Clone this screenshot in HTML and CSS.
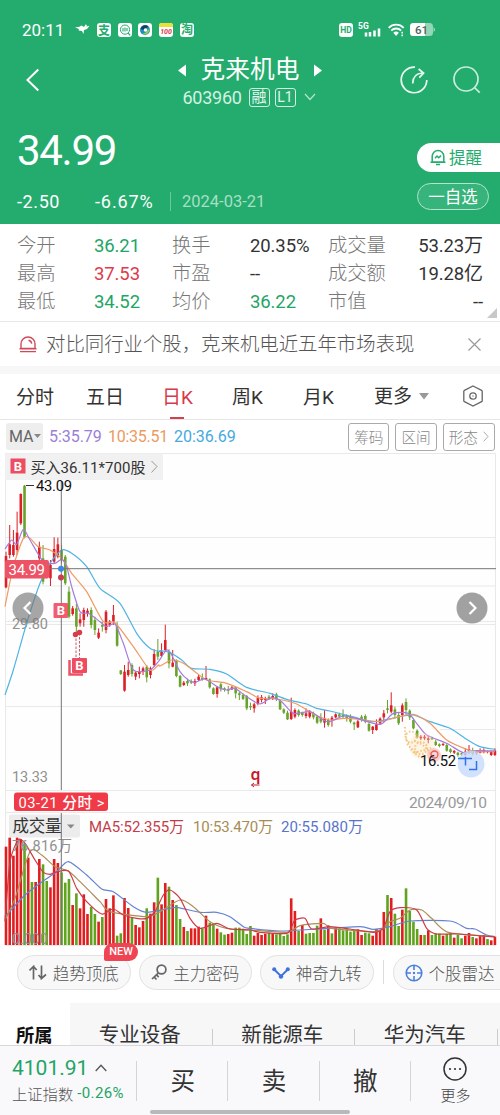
FILE: index.html
```html
<!DOCTYPE html>
<html lang="zh-CN">
<head>
<meta charset="utf-8">
<title>克来机电 603960</title>
<link rel="stylesheet" href="styles.css">
</head>
<body>
<div class="app">
  <header class="header">
    <div class="status">
      <span class="clock">20:11</span>
      <div class="status-apps">
        <svg width="15" height="14" viewBox="0 0 15 14"><path d="M0 4.500l4.500-.800L6.500 2.500 9 4l1.500-2.500L12 2l-.800 1.500 3.300-.700L12 6l-3 1-.500 4L7 8 3.500 7.500 4 6z" fill="#fff"/></svg>
        <svg width="14" height="14" viewBox="0 0 14 14"><rect width="14" height="14" rx="3" fill="#fff"/><text x="7" y="11.500" class="app-glyph">支</text></svg>
        <svg width="14" height="14" viewBox="0 0 14 14"><rect width="14" height="14" rx="3" fill="#fff"/><circle cx="7" cy="6.600" r="4.600" fill="none" stroke="#24ac6e"/><path d="M10 10l2.300 2.300M5 5v3.400M7 4.400v4.200M9 5v3" stroke="#24ac6e" stroke-width="1.100"/></svg>
        <svg width="14" height="14" viewBox="0 0 14 14"><rect width="14" height="14" rx="3" fill="#fff"/><circle cx="7" cy="7" r="5" fill="#1c8ec0"/><path d="M2.500 6a5 5 0 0 1 8-2.600L6 7z" fill="#173f5a"/><path d="M11.500 5.500a5 5 0 0 1-7 5.500l3-1.500z" fill="#8fd14a"/><circle cx="7.500" cy="7" r="1.800" fill="#fff"/></svg>
        <svg width="14" height="14" viewBox="0 0 14 14"><rect width="14" height="14" rx="3" fill="#fff"/><path d="M0 4V2.500A2.500 2.500 0 0 1 2.500 0h9A2.500 2.500 0 0 1 14 2.500V4z" fill="#e9e13a"/><text x="7" y="10.500" class="app-hundred">100</text></svg>
        <svg width="14" height="14" viewBox="0 0 14 14"><rect width="14" height="14" rx="3" fill="#fff"/><text x="7" y="11.200" class="app-glyph">淘</text></svg>
      </div>
      <div class="status-sys">
        <svg width="14" height="14" viewBox="0 0 14 14"><rect width="14" height="14" rx="3" fill="#fff"/><text x="7" y="10.200" class="hd">HD</text></svg>
        <svg width="24" height="15" viewBox="0 0 24 15"><text x="0" y="7" class="five-g">5G</text><path d="M8 14.500v-4M12 14.500V10M16.500 14.500V8.500M21 14.500V6.500" stroke="#fff" stroke-width="2.500"/></svg>
        <svg width="17" height="14" viewBox="0 0 17 14"><g fill="none" stroke="#fff" stroke-width="1.800"><path d="M.700 4.800a10.500 10.500 0 0 1 15 0M3.300 7.600a6.800 6.800 0 0 1 9.800 0"/></g><path d="M5.300 9.800a4 4 0 0 1 5.600 0L8.100 13z" fill="#fff"/><path d="M14.200 8.800v1.800M14.200 11.400v1.800" stroke="#fff" stroke-width="1.500"/></svg>
        <svg width="25" height="13" viewBox="0 0 25 13"><rect width="23" height="13" rx="3.500" fill="#94d7b8"/><path d="M23.500 4l1.500 1.500v2L23.500 9z" fill="#94d7b8"/><path d="M3.500 0H15v13H3.500A3.500 3.500 0 0 1 0 9.500v-6A3.500 3.500 0 0 1 3.500 0z" fill="#fff"/><text x="11.500" y="10.700" class="battery">61</text></svg>
      </div>
    </div>
    <div class="nav">
      <svg class="back" width="14" height="24" viewBox="0 0 14 24"><path d="M12.300 1.500L1.500 12l10.800 10.500" fill="none" stroke="#fff" stroke-width="2"/></svg>
      <div class="nav-title">
        <div class="name-row">
          <svg width="8" height="13" viewBox="0 0 8 13"><path d="M8 .500v12L0 6.500z" fill="#fff"/></svg>
          <span class="name">克来机电</span>
          <svg width="8" height="13" viewBox="0 0 8 13"><path d="M0 .500v12l8-6z" fill="#fff"/></svg>
        </div>
        <div class="code-row">
          <span class="code">603960</span><span class="tag">融</span><span class="tag tag-level">L1</span>
          <svg width="12" height="8" viewBox="0 0 12 8"><path d="M1 1l5 5.500L11 1" fill="none" stroke="#b4e4cd" stroke-width="1.200"/></svg>
        </div>
      </div>
      <div class="nav-actions">
        <svg width="28" height="28" viewBox="0 0 28 28"><g fill="none" stroke="#e9f8f1" stroke-width="1.700"><path d="M15 1.200A12.800 12.800 0 1 0 26.800 14"/><path d="M12.700 17.500c0-6 3-10 9.800-10.500M18.600 3l5 4-4.300 4.600"/></g></svg>
        <svg width="28" height="28" viewBox="0 0 28 28"><g fill="none" stroke="#c9eedd" stroke-width="1.700"><circle cx="13" cy="13" r="12"/><path d="M21.500 21.500l5.200 5.200"/></g></svg>
      </div>
    </div>
    <div class="quote">
      <div class="quote-main">
        <div class="price">34.99</div>
        <div class="change"><span class="delta">-2.50</span><span class="percent">-6.67%</span><span class="date">2024-03-21</span></div>
      </div>
      <div class="quote-actions">
        <div class="pill-alert"><svg width="16" height="17" viewBox="0 0 16 17"><g fill="none" stroke="#24ac6e" stroke-width="1.500"><path d="M2.200 13V7.300a5.800 5.800 0 0 1 11.600 0V13zM.500 13.300h15"/><path d="M5 9.200l2-2.200 1.700 1.800L11 6.600"/><path d="M6 15.500h4"/></g></svg><span>提醒</span></div>
        <div class="pill-watch">一自选</div>
      </div>
    </div>
  </header>

  <section class="stats">
    <span>今开</span><b class="down">36.21</b><span>换手</span><b>20.35%</b><span>成交量</span><b class="end">53.23<i>万</i></b>
    <span>最高</span><b class="up">37.53</b><span>市盈</span><b>--</b><span>成交额</span><b class="end">19.28<i>亿</i></b>
    <span>最低</span><b class="down">34.52</b><span>均价</span><b class="down">36.22</b><span>市值</span><b class="end">--</b>
    <svg class="corner" width="10" height="10" viewBox="0 0 10 10"><path d="M10 0v10H0z" fill="#c8c8c8"/></svg>
  </section>

  <section class="notice">
    <svg width="18" height="17" viewBox="0 0 18 17"><g fill="none" stroke="#cf4a58" stroke-width="1.400"><path d="M2 12.500V8a7 7 0 0 1 14 0v4.500zM.500 12.800h17M1 15.600h16"/><path d="M9.500 4.300c2 .400 3 1.700 3.200 3.400"/></g></svg>
    <span>对比同行业个股，克来机电近五年市场表现</span>
    <svg class="close" width="13" height="13" viewBox="0 0 13 13"><path d="M.500.500l12 12M12.500.500l-12 12" stroke="#999" stroke-width="1.200"/></svg>
  </section>

  <nav class="tabs">
    <span>分时</span><span>五日</span><span class="active">日K</span><span>周K</span><span>月K</span><span class="more">更多<svg width="10" height="7" viewBox="0 0 10 7"><path d="M0 0h10L5 6.500z" fill="#999"/></svg></span>
    <svg class="settings" width="20" height="22" viewBox="0 0 20 22"><g fill="none" stroke="#666" stroke-width="1.300"><path d="M10 1l8.600 4.300q.600.300.600 1v9.400q0 .700-.600 1L10 21l-8.600-4.300q-.600-.300-.600-1V6.300q0-.700.600-1z"/><circle cx="10" cy="11" r="3.200"/></g><circle cx="10" cy="11" r=".8" fill="#888"/></svg>
  </nav>

  <div class="ma-bar">
    <span class="ma-select">MA<svg width="7" height="5" viewBox="0 0 7 5"><path d="M0 0h7L3.500 4z" fill="#888"/></svg></span>
    <span class="ma5">5:35.79</span><span class="ma10">10:35.51</span><span class="ma20">20:36.69</span>
    <div class="tools"><span>筹码</span><span>区间</span><span>形态<svg width="6" height="11" viewBox="0 0 6 11"><path d="M.700.700l4.300 4.800L.700 10.300" fill="none" stroke="#aaa"/></svg></span></div>
  </div>

  <svg class="chart" width="500" height="493" viewBox="0 453 500 493">
    <rect x="5" y="453" width="491" height="492" fill="#fefefe"/>
    <g class="grid"><path d="M5 453.500H496M5 537.500H496M5 586H496M5 621.500H496M5 624.500H496M5 706.500H496M440 729.500H496M5 790.500H496M5 812.500H496M5 945.500H496M5.500 453V945M495.500 453V945"/></g>
    <text x="12" y="629" class="axis" textLength="36">29.80</text>
    <text x="12" y="781.500" class="axis" textLength="36">13.33</text>
    <rect x="9" y="814.500" width="71" height="23" rx="2" fill="#ececec"/>
    <path d="M67 824.500h7.500l-3.750 4z" fill="#888"/>
    <g id="candles"></g>
    <g id="volumes"></g>
    <g id="averages"></g>
    <text x="12" y="850.500" class="axis" textLength="60">76.816万</text>
    <text x="12" y="943.500" class="axis" textLength="36">0.000</text>
    <path d="M61.300 481V790M61.300 813V945" stroke="#747474"/>
    <path d="M5 568.700H496" stroke="#747474"/>

    <rect x="5" y="453.500" width="158" height="26.500" fill="#f1f1f1"/>
    <rect x="10.500" y="458.500" width="15" height="15" fill="#ee4c60"/>
    <text x="18" y="471" class="mark">B</text>
    <text x="30.500" y="472.500" class="trade" textLength="115">买入36.11*700股</text>
    <path d="M151.500 461l5.500 5.500-5.500 6" fill="none" stroke="#999"/>
    <path d="M26 485.500h8" stroke="#333"/>
    <text x="36" y="491" class="extreme" textLength="36">43.09</text>

    <circle cx="28" cy="608" r="15.500" fill="#777" opacity=".65"/>
    <path d="M30.500 602l-6 6 6 6" class="arrow"/>
    <circle cx="472" cy="608" r="15.500" fill="#a1a1a1"/>
    <path d="M469.500 602l6 6-6 6" class="arrow"/>
    <rect x="5" y="560" width="44" height="18.500" rx="2" fill="#ec5365"/>
    <text x="8.500" y="575" class="last" textLength="36.500">34.99</text>
    <circle cx="61" cy="568.700" r="3" fill="#3b86e8"/>
    <circle cx="61" cy="577.500" r="3" fill="#c6404d"/>
    <rect x="53.500" y="603" width="14.500" height="15" rx="1" fill="#ee4c60" opacity=".9"/>
    <text x="61" y="615.300" class="mark">B</text>
    <path d="M76 634.500V658M79.500 633V658" stroke="#d05560" stroke-dasharray="2.500 1.500"/>
    <circle cx="75.500" cy="634.500" r="2.700" fill="#da3b4b"/><circle cx="79.500" cy="632.500" r="2.700" fill="#da3b4b"/>
    <path d="M69.500 660v14.500h13.500" fill="none" stroke="#ec5365" stroke-width="2.500"/>
    <rect x="72" y="658" width="15" height="15" rx="1" fill="#ee4c60"/>
    <text x="79.500" y="670.300" class="mark">B</text>

    <circle cx="422" cy="746" r="13" fill="#fbe3b8" opacity=".35"/>
    <g fill="none" stroke="#f2b85c" stroke-width="2" stroke-dasharray="1.500 1.800" opacity=".75"><circle cx="411" cy="737" r="5.500"/><circle cx="421" cy="748" r="6"/><path d="M405 727c0 14 5 24 15 30M414 741c8 2 14 8 17 14M414 753l17-5M407 744l8 8"/></g>
    <circle cx="434" cy="755" r="7" fill="#f7a6a6" opacity=".5"/><circle cx="434.500" cy="754.500" r="3.500" fill="none" stroke="#e85b5b" stroke-width="1.300"/>
    <circle cx="471" cy="764" r="13.500" fill="#c8dbfb" opacity=".8"/>
    <path d="M458 758.500h14M465.500 757v8.500M476.500 761v8.500H469" fill="none" stroke="#2d72ee" stroke-width="1.500"/>
    <text x="420" y="765.500" class="extreme" textLength="36">16.52</text>
    <text x="255.500" y="779.500" class="event">q</text><path d="M251.500 785h8M254 783l-2.500 2 2.500 2" fill="none" stroke="#c9182b"/>

    <rect x="14" y="792.500" width="94" height="18.500" rx="3" fill="#f03a48"/>
    <text x="18.500" y="807.500" class="day" textLength="86">03-21 分时 &gt;</text>
    <text x="409" y="807.500" class="day-end" textLength="78">2024/09/10</text>
    <text x="12.500" y="832" class="vol-title" textLength="49">成交量</text>
    <text x="89" y="832" class="vol v5" textLength="95">MA5:52.355万</text>
    <text x="193" y="832" class="vol v10" textLength="80">10:53.470万</text>
    <text x="281" y="832" class="vol v20" textLength="82">20:55.080万</text>
  </svg>

  <div class="signals">
    <span class="chip"><svg width="18" height="15" viewBox="0 0 18 15"><path d="M4.500 14.500V1.500L.500 5.500M4.500 1.500l3.200 3.500M12.500.500v13l4.500-4M12.500 13.500L9.500 10" fill="none" stroke="#666" stroke-width="1.700"/></svg>趋势顶底<em class="badge">NEW</em></span>
    <span class="chip"><svg width="16" height="17" viewBox="0 0 16 17"><g fill="none" stroke="#666" stroke-width="1.700"><circle cx="10.500" cy="5.500" r="4.400"/><path d="M7.500 8.800L1 15M3 12.800l2.500 2.700M5.300 10.700l2.400 2.400"/></g></svg>主力密码</span>
    <span class="chip"><svg width="18" height="12" viewBox="0 0 18 12"><path d="M2 2.200l7 7 7-7" fill="none" stroke="#3e72dd" stroke-width="2"/><g fill="#3e72dd"><circle cx="2.200" cy="2.300" r="2"/><circle cx="9" cy="9.500" r="2.200"/><circle cx="15.800" cy="2.300" r="2"/></g></svg>神奇九转</span>
    <i class="split"></i>
    <span class="chip chip-last"><svg width="18" height="18" viewBox="0 0 18 18"><g fill="none" stroke="#4a80dd" stroke-width="1.600"><circle cx="9" cy="9" r="7.800"/><path d="M9 1v5M9 12v5M1 9h5M12 9h5"/></g><circle cx="9" cy="9" r="1.200" fill="#4a80dd"/></svg>个股雷达</span>
  </div>

  <div class="sectors">
    <span class="belong">所属</span>
    <span class="sector">专业设备</span><span class="sector">新能源车</span><span class="sector">华为汽车</span>
  </div>

  <footer class="bottom">
    <div class="index">
      <div class="index-value">4101.91<svg width="12" height="8" viewBox="0 0 12 8"><path d="M.700 7L6 1.200 11.300 7" fill="none" stroke="#555" stroke-width="1.300"/></svg></div>
      <div class="index-name">上证指数<span>-0.26%</span></div>
    </div>
    <div class="trade-btn">买</div><div class="trade-btn">卖</div><div class="trade-btn">撤</div>
    <div class="more-btn"><svg width="24" height="24" viewBox="0 0 24 24"><circle cx="12" cy="12" r="11" fill="none" stroke="#333" stroke-width="1.500"/><g fill="#333"><circle cx="7" cy="12" r="1.100"/><circle cx="12" cy="12" r="1.100"/><circle cx="17" cy="12" r="1.100"/></g></svg><span>更多</span></div>
    <i class="home"></i>
  </footer>
</div>
<script src="chart.js"></script>
</body>
</html>
```
FILE: styles.css
```css
* { box-sizing: border-box; }
body {
  margin: 0;
  background: #fff;
  color: #333;
  font-family: Roboto, "Noto Sans CJK SC", sans-serif;
}
svg { display: block; flex: none; }
i, em { font-style: normal; }
.app { width: 500px; height: 1115px; overflow: hidden; display: flex; flex-direction: column; }
.app > * { flex: none; }

/* header */
.header { height: 224px; background: #24ac6e; color: #fff; }
.status { height: 44px; padding: 15px 65px 0 22px; display: flex; align-items: center; }
.clock { width: 53px; font-size: 17px; font-weight: 450; line-height: 28px; }
.status-apps { display: flex; gap: 6.800px; align-items: center; }
.status-sys { display: flex; gap: 5.300px; align-items: center; margin-left: auto; }
.app-glyph { font-size: 12px; font-weight: 700; fill: #24ac6e; text-anchor: middle; }
.app-hundred { font-size: 7px; font-weight: 700; fill: #d34; text-anchor: middle; font-style: italic; }
.hd { font-size: 8.500px; font-weight: 700; fill: #24ac6e; text-anchor: middle; }
.five-g { font-size: 8.500px; font-weight: 700; fill: #fff; }
.battery { font-size: 11.500px; font-weight: 500; fill: #4a6558; text-anchor: middle; }
.nav { height: 70px; display: grid; grid-template-columns: 140px 220px 140px; }
.back { margin: 24px 0 0 26px; }
.nav-title { display: flex; flex-direction: column; align-items: center; }
.name-row { height: 40px; padding-top: 12px; display: flex; align-items: center; gap: 15px; }
.name { font-size: 24.700px; line-height: 30px; }
.code-row { height: 26px; display: flex; align-items: center; padding-right: 2px; }
.code { font-size: 18px; letter-spacing: -.25px; color: #d3f1e3; width: 66px; }
.tag { width: 21px; height: 19px; margin-right: 5px; border: 1px solid #d3f1e3; border-radius: 3px; font-size: 15px; line-height: 17px; text-align: center; color: #e4f7ee; }
.tag-level { margin-right: 8px; font-size: 14px; }
.nav-actions { display: flex; gap: 25px; padding: 22px 0 0 40px; }
.quote { height: 110px; display: flex; justify-content: space-between; padding-left: 17px; }
.price { height: 76px; padding-top: 12px; font-size: 42px; font-weight: 450; line-height: 49px; letter-spacing: -1.300px; }
.change { display: flex; align-items: center; height: 22px; font-size: 18px; font-weight: 450; }
.delta { width: 78px; letter-spacing: .6px; }
.percent { width: 75px; letter-spacing: .9px; }
.date { border-left: 1px solid #6bc89d; padding-left: 11px; line-height: 19px; font-size: 16.500px; font-weight: 400; color: #a7dfc5; }
.quote-actions { padding-top: 29px; width: 83px; }
.pill-alert { height: 28.500px; display: flex; align-items: center; gap: 3px; padding-left: 13px; background: #fff; color: #24ac6e; border-radius: 15px 0 0 15px; font-size: 16.500px; }
.pill-watch { margin-top: 11.500px; width: 72px; height: 27px; border: 1px solid #b5e3cd; border-radius: 14px; background: #37b47c; font-size: 16.500px; line-height: 27px; text-align: center; }

/* quote figures */
.stats { position: relative; height: 97px; padding: 8px 17px 0; display: grid; grid-template-columns: 77px 78px 78px 78px 74px 1fr; grid-auto-rows: 28px; align-items: center; line-height: 28px; }
.stats span { font-size: 19.300px; font-weight: 300; color: #777; }
.stats b { font-size: 18.500px; font-weight: 450; letter-spacing: -.1px; color: #333; white-space: nowrap; }
.stats b i { font-weight: 400; font-size: 19px; }
.stats .up { color: #dc3c4c; }
.stats .down { color: #1fa565; }
.stats .end { text-align: right; }
.corner { position: absolute; right: 3px; bottom: 3px; }

.notice { height: 53px; border-top: 1px solid #e8e8e8; border-bottom: 8px solid #f7f7f7; padding: 0 19px 0 19px; display: flex; align-items: center; font-size: 19.400px; font-weight: 300; color: #555; }
.notice span { padding-top: 2px; margin-left: 9px; line-height: 28px; white-space: nowrap; }
.close { margin-left: auto; }

.tabs { height: 46px; border-bottom: 1px solid #e6e6e6; padding-left: 16px; display: grid; grid-template-columns: 70px 76px 70px 71px 71px 89px auto; grid-template-rows: 45px; font-size: 19px; line-height: 47px; white-space: nowrap; }
.tabs .active { color: #d63a4a; background: linear-gradient(#d2404e, #d2404e) 8px 43px / 14px 2px no-repeat; }
.more { display: flex; align-items: center; gap: 7px; }
.settings { margin-top: 11px; }

.ma-bar { height: 33px; padding: 0 5px 0 6px; display: flex; align-items: center; font-size: 16px; letter-spacing: -.05px; }
.ma-select { width: 37px; height: 27px; padding-left: 3px; margin-right: 6px; display: flex; align-items: center; gap: 1px; background: #eee; border-radius: 3px; color: #666; }
.ma5 { width: 59px; color: #9b7ed8; }
.ma10 { width: 66px; color: #ec9a60; letter-spacing: -.25px; }
.ma20 { color: #45a9e0; }
.tools { margin-left: auto; display: flex; gap: 6px; }
.tools span { height: 28px; padding: 0 5px; border: 1px solid #aaa; border-radius: 3px; display: flex; align-items: center; gap: 5px; font-size: 14.700px; font-weight: 300; color: #888; }

/* chart */
.grid { fill: none; stroke: #e9e9e9; }
.axis { font-size: 14.500px; fill: #909090; }
.mark { font-size: 13px; font-weight: 700; fill: #fff; text-anchor: middle; }
.trade { font-size: 15px; fill: #333; }
.extreme { font-size: 14.800px; font-weight: 450; fill: #111; }
.last { font-size: 15px; font-weight: 450; fill: #fff; }
.arrow { fill: none; stroke: #fff; stroke-width: 2.200; }
.event { font: 600 16px "Noto Sans", sans-serif; fill: #c9182b; text-anchor: middle; }
.day { font-size: 14.700px; font-weight: 450; fill: #fff; }
.day-end { font-size: 15.500px; fill: #999; }
.vol-title { font-size: 16.500px; fill: #333; }
.vol { font-size: 15px; }
.v5 { fill: #c43c48; }
.v10 { fill: #a58d55; }
.v20 { fill: #5874cc; }

/* signal chips */
.signals { height: 57px; padding: 9px 0 0 17px; display: flex; align-items: flex-start; }
.chip { position: relative; width: 113.500px; height: 35px; margin-right: 8px; flex: none; border: 1px solid #e2e2e2; border-radius: 18px; background: #f8f8f8; display: flex; align-items: center; justify-content: center; gap: 6px; font-size: 16.500px; font-weight: 300; color: #555; }
.chip-last { width: 130px; justify-content: flex-start; padding-left: 11px; }
.split { flex: none; width: 1px; height: 24px; margin: 5px 9px 0 1px; background: #ddd; }
.badge { position: absolute; left: 86px; top: -13px; width: 34px; height: 18px; border-radius: 9px 9px 9px 2px; background: #ef4454; color: #fff; font-size: 11px; font-weight: 500; line-height: 18px; text-align: center; }

.sectors { height: 42px; display: flex; background: #f7f7f8; }
.belong { width: 70px; padding-left: 16px; background: #fff; font-size: 18.300px; font-weight: 700; line-height: 66px; color: #111; }
.sector { width: 142.500px; height: 42px; padding-right: 3px; text-align: center; font-size: 20.500px; line-height: 64px; background: linear-gradient(#ccc, #ccc) right bottom / 1px 16px no-repeat; }

/* bottom bar */
.bottom { position: relative; height: 70px; border-top: 1px solid #d8d8dc; background: #f9f9fb; display: flex; }
.index { width: 137px; padding: 9px 0 0 12px; background: linear-gradient(#d5d5d8, #d5d5d8) right 15px / 1px 40px no-repeat; }
.index-value { height: 25px; display: flex; align-items: center; gap: 7px; font-size: 21px; font-weight: 450; color: #1fa565; }
.index-name { height: 25px; display: flex; align-items: center; gap: 4px; font-size: 15.300px; font-weight: 300; color: #555; white-space: nowrap; }
.index-name span { font-size: 15px; font-weight: 400; letter-spacing: .4px; color: #1fa565; }
.trade-btn { width: 91.300px; font-size: 24.500px; line-height: 72px; text-align: center; background: linear-gradient(#d5d5d8, #d5d5d8) right 15px / 1px 40px no-repeat; }
.more-btn { flex: 1; padding-top: 11px; display: flex; flex-direction: column; align-items: center; gap: 4px; font-size: 15px; font-weight: 300; color: #444; line-height: 22px; }
.home { position: absolute; left: 150px; bottom: 1px; width: 200px; height: 4px; border-radius: 2px; background: #b9b9bc; }
```
FILE: chart.js
```js
const NS = 'http://www.w3.org/2000/svg';
const FIRST_X = 6;
const PITCH = 3.704;
const RED = '#dc1f28';
const GREEN = '#68a32b';

function add(parent, tag, attrs) {
  const node = document.createElementNS(NS, tag);
  for (const key in attrs) node.setAttribute(key, attrs[key]);
  parent.appendChild(node);
}

// R/G for each session, in order.
const candleColors =
  'RRRRRGRRRRGGRRRGGGRGRRRGGRGRRRGGRRGRRRGRRGRR' +
  'GRGGRGGRRGRGGRGGGRGGGGGRRRRGRGGGGRRGGRRGGGRGR' +
  'RGGGGGRGGGRRRRGRGGRGGGGRRRGGGRGGRGGRRGRRRRRR';

// High, body top, body bottom, low; thirds of a pixel below each group's base.
const candleGroups = [
  { base: 450, rows: '305,318,412,415 225,283,315,325 240,285,315,320 185,248,300,315 130,132,220,225 105,107,262,265 340,345,370,380 340,345,370,380 330,345,370,380 275,290,325,330 285,325,395,403 330,335,375,385 330,345,385,408 262,297,335,340 263,283,320,325 285,300,330,340 315,320,400,405 410,425,500,505 468,475,492,497 462,475,530,555 490,508,520,530 473,480,510,530 475,482,490,500 472,480,525,535 500,510,540,555 535,548,563,567 515,525,530,545 480,485,540,550 510,515,525,530 465,495,515,525 515,530,587,590 660,661,672,675 645,665,722,725 635,660,675,680 640,645,672,680 665,668,680,690 650,665,672,685 650,655,665,675 645,650,682,697 650,655,675,685 598,612,645,650 567,605,620,630 580,605,618,622 524,570,600,605' },
  { base: 600, rows: '148,155,190,205 150,188,200,202 178,182,228,232 225,228,260,262 243,248,255,258 236,243,250,258 238,243,248,252 236,243,250,258 225,230,240,243 220,233,238,242 198,234,238,240 235,238,262,266 262,265,282,284 258,262,282,293 248,253,268,275 262,265,270,275 258,268,272,283 258,262,268,270 258,262,280,295 275,280,285,300 280,285,297,300 285,288,325,330 308,318,322,330 308,313,325,338 286,293,312,316 285,292,300,307 290,295,300,312 285,290,298,300 280,288,295,300 278,283,298,303 300,303,328,330 325,328,338,342 332,338,358,360 293,335,357,360 325,330,350,355 328,332,345,350 335,338,345,350 325,340,348,355 330,335,350,355 335,340,352,358 345,350,368,372 340,355,365,370 330,355,368,383 355,360,375,380' },
  { base: 580, rows: '408,413,420,440 400,403,412,415 398,403,410,415 388,403,410,415 403,405,415,425 403,408,425,430 425,428,433,450 420,424,442,444 405,410,418,425 403,408,425,430 425,432,452,455 438,440,450,462 418,433,450,452 412,416,430,435 390,400,412,427 360,385,390,400 337,376,395,400 380,388,405,415 398,405,430,435 370,376,405,425 355,366,390,405 388,392,412,420 415,420,445,448 448,452,472,475 465,470,475,480 465,470,475,480 468,475,480,490 470,473,478,480 480,485,495,498 490,493,498,502 488,492,495,498 490,495,512,515 505,508,516,520 510,513,518,522 515,518,525,530 518,520,524,528 505,515,525,540 495,508,518,522 503,510,522,527 510,515,520,525 505,514,518,520 505,510,516,520 512,514,516,520 512,516,525,528 505,512,525,528' }
];

const candles = document.getElementById('candles');
let index = 0;
for (const group of candleGroups) {
  for (const row of group.rows.split(' ')) {
    const [high, top, bottom, low] = row.split(',').map(v => group.base + v / 3);
    const x = FIRST_X + PITCH * index;
    const fill = candleColors[index] === 'R' ? RED : GREEN;
    add(candles, 'rect', { x: x - 0.5, y: high, width: 1, height: low - high, fill });
    add(candles, 'rect', { x: x - 1.3, y: top, width: 2.6, height: bottom - top, fill });
    index++;
  }
}

// Colour and top of every volume column, thirds of a pixel below y = 785.
const volumeRows = 'R185 R158 R212 R158 R163 G175 R218 G291 R291 R222 G238 G288 R307 R222 R234 G262 G293 G282 R360 G325 R370 R328 R387 G366 G387 R410 G396 R342 R370 R331 G452 G445 R339 R369 G398 R420 R427 R408 G370 R386 R352 G278 R358 R294 G305 R345 G360 G402 R426 G438 R430 R430 R425 G431 R392 G413 G418 R431 G442 G449 R447 R443 G428 G428 G431 G447 G423 R452 R444 R450 R446 G443 R447 G448 G446 G453 G448 R340 R378 G438 R420 G446 G444 G444 G422 R400 G434 R421 G445 R428 G430 G436 G433 G440 G436 R433 R450 G443 G445 R452 R432 R438 R381 G330 R339 G386 G423 R374 G310 G378 G410 G432 R450 G450 R436 G450 G445 G446 R452 G447 G444 R458 G450 G460 R452 R444 G456 R460 R452 R450 G462 R466 R455';
const volumes = document.getElementById('volumes');
volumeRows.split(' ').forEach((row, i) => {
  const y = 785 + row.slice(1) / 3;
  add(volumes, 'rect', {
    x: FIRST_X + PITCH * i - 1.3, y, width: 2.6, height: 945 - y,
    fill: row[0] === 'R' ? '#e11d20' : '#60a31e'
  });
});

// Each average is a list of [origin x, origin y, points in thirds of a pixel].
const averages = [
  ['#4fb3e4', [0, 450, '15,735 40,660 80,520 120,400 150,340 185,300 215,310 260,350 300,415 360,460 410,550 450,595 480,605'], [160, 600, '0,152 30,158 65,180 95,205 150,208 200,222 260,262 330,280 380,298 440,312 470,325'], [330, 580, '0,393 60,408 130,425 200,412 250,405 300,425 360,445 410,478 450,500 495,508']],
  ['#ef9a62', [0, 450, '15,470 40,350 70,265 90,265 115,290 150,300 185,325 215,370 260,425 310,515 345,518 400,590 450,660 475,645'], [160, 600, '0,198 35,180 70,190 105,215 140,240 200,250 260,275 300,295 350,297 410,312 460,342'], [330, 580, '0,420 40,415 90,418 150,425 200,412 250,403 300,430 350,480 410,508 440,515 495,515']],
  ['#a67cdd', [0, 450, '15,297 35,270 50,283 70,238 90,270 130,335 165,340 185,328 200,350 215,410 240,485 265,490 300,515 320,530 345,522 370,580 400,660 450,660 475,635'], [160, 600, '0,178 20,150 35,165 60,215 85,240 105,247 135,237 175,262 200,270 225,265 260,290 300,312 335,293 365,305 400,340 450,335 490,360'], [330, 580, '0,425 40,408 80,415 150,433 190,400 235,400 260,430 290,465 350,490 400,518 440,512 495,513']],
  ['#6583d2', [0, 785, '15,395 75,330 120,295 170,260 205,230 260,270 305,312 340,320 400,365 440,382 500,372 530,367 600,382 650,382 690,395 730,425'], [250, 785, '0,430 90,438 200,432 330,425 370,433 420,425 480,408 600,408 650,430 675,432 710,450 735,455']],
  ['#ac8e56', [0, 785, '15,405 45,340 90,200 125,210 165,245 205,258 240,290 300,350 330,380 440,395 480,380 540,345 580,365 630,410 680,430'], [250, 785, '0,435 110,442 150,422 220,415 245,430 370,440 400,430 420,410 450,400 480,375 515,375 545,400 595,442 735,455']],
  ['#cc3c46', [0, 785, '15,410 30,230 55,165 75,175 105,225 130,262 150,268 165,262 205,258 230,310 260,350 305,387 340,372 370,390 410,400 440,400 465,380 490,330 510,315 540,340 570,400 600,430 650,415 690,432'], [250, 785, '0,435 30,442 110,445 125,425 135,405 165,400 185,432 240,425 300,432 370,442 400,430 420,380 450,368 500,375 530,430 560,447 620,447 735,456']]
];
const lines = document.getElementById('averages');
for (const [stroke, ...parts] of averages) {
  const pts = [];
  for (const [ox, oy, list] of parts) {
    for (const pair of list.split(' ')) {
      const [x, y] = pair.split(',').map(Number);
      pts.push([ox + x / 3, oy + y / 3]);
    }
  }
  let d = `M${pts[0]}`;
  for (let i = 0; i < pts.length - 1; i++) {
    const a = pts[i - 1] || pts[i], b = pts[i], c = pts[i + 1], e = pts[i + 2] || c;
    d += `C${b[0] + (c[0] - a[0]) / 8} ${b[1] + (c[1] - a[1]) / 8} ${c[0] - (e[0] - b[0]) / 8} ${c[1] - (e[1] - b[1]) / 8} ${c[0]} ${c[1]}`;
  }
  add(lines, 'path', { d, fill: 'none', stroke, 'stroke-width': 1.2 });
}
```
